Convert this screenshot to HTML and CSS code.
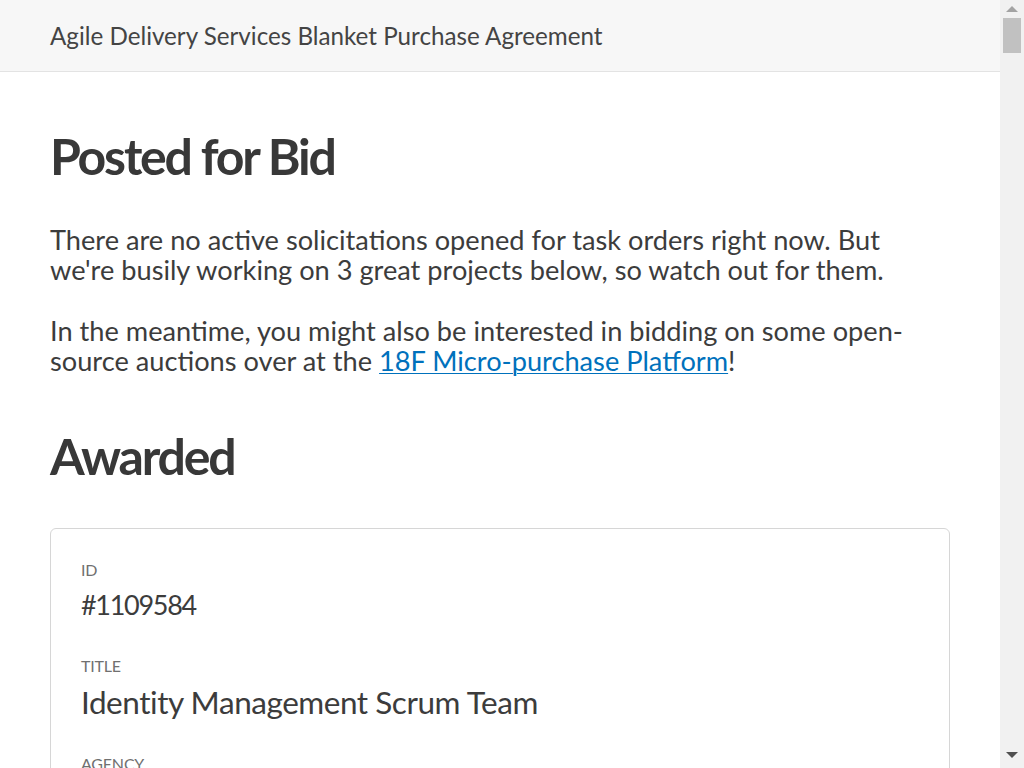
FILE: index.html
```html
<!DOCTYPE html>
<html lang="en">
<head>
<meta charset="utf-8">
<title>Agile Delivery Services Blanket Purchase Agreement</title>
<link rel="stylesheet" href="styles.css">
</head>
<body>
<header class="site-header">
  <span class="site-title">Agile Delivery Services Blanket Purchase Agreement</span>
</header>
<main class="content">
  <h1 class="section-title first">Posted for Bid</h1>
  <p class="lead">There are no active solicitations opened for task orders right now. But we're busily working on 3 great projects below, so watch out for them.</p>
  <p class="lead second">In the meantime, you might also be interested in bidding on some open-source auctions over at the <a href="#">18F Micro-purchase Platform</a>!</p>

  <h1 class="section-title awarded">Awarded</h1>

  <section class="card">
    <div class="field"><div class="label">ID</div><div class="value">#1109584</div></div>
    <div class="field"><div class="label">Title</div><div class="value title">Identity Management Scrum Team</div></div>
    <div class="field"><div class="label">Agency</div><div class="value">General Services Administration</div></div>
    <div class="field"><div class="label">Vendor</div><div class="value">Fearless Solutions, LLC</div></div>
    <div class="field"><div class="label">Award date</div><div class="value">June 21, 2017</div></div>
    <div class="field"><div class="label">Award amount</div><div class="value">$1,946,336.00</div></div>
    <div class="field"><div class="label">Period of performance</div><div class="value">12 months</div></div>
  </section>

  <section class="card">
    <div class="field"><div class="label">ID</div><div class="value">#1107620</div></div>
    <div class="field"><div class="label">Title</div><div class="value title">Cloud.gov Platform Operations</div></div>
    <div class="field"><div class="label">Agency</div><div class="value">General Services Administration</div></div>
    <div class="field"><div class="label">Vendor</div><div class="value">Agile Six Applications, Inc.</div></div>
    <div class="field"><div class="label">Award date</div><div class="value">May 4, 2017</div></div>
    <div class="field"><div class="label">Award amount</div><div class="value">$1,481,208.00</div></div>
    <div class="field"><div class="label">Period of performance</div><div class="value">12 months</div></div>
  </section>

  <section class="card">
    <div class="field"><div class="label">ID</div><div class="value">#1104512</div></div>
    <div class="field"><div class="label">Title</div><div class="value title">Federal Election Commission Website Redesign</div></div>
    <div class="field"><div class="label">Agency</div><div class="value">Federal Election Commission</div></div>
    <div class="field"><div class="label">Vendor</div><div class="value">Flexion, Inc.</div></div>
    <div class="field"><div class="label">Award date</div><div class="value">March 2, 2017</div></div>
    <div class="field"><div class="label">Award amount</div><div class="value">$812,450.00</div></div>
    <div class="field"><div class="label">Period of performance</div><div class="value">9 months</div></div>
  </section>

  <section class="card">
    <div class="field"><div class="label">ID</div><div class="value">#1101876</div></div>
    <div class="field"><div class="label">Title</div><div class="value title">USAJOBS Candidate Experience</div></div>
    <div class="field"><div class="label">Agency</div><div class="value">Office of Personnel Management</div></div>
    <div class="field"><div class="label">Vendor</div><div class="value">Nava Public Benefit Corporation</div></div>
    <div class="field"><div class="label">Award date</div><div class="value">January 18, 2017</div></div>
    <div class="field"><div class="label">Award amount</div><div class="value">$1,205,900.00</div></div>
    <div class="field"><div class="label">Period of performance</div><div class="value">12 months</div></div>
  </section>

  <section class="card">
    <div class="field"><div class="label">ID</div><div class="value">#1098433</div></div>
    <div class="field"><div class="label">Title</div><div class="value title">Data.gov Catalog Modernization</div></div>
    <div class="field"><div class="label">Agency</div><div class="value">General Services Administration</div></div>
    <div class="field"><div class="label">Vendor</div><div class="value">TrueTandem, LLC</div></div>
    <div class="field"><div class="label">Award date</div><div class="value">November 9, 2016</div></div>
    <div class="field"><div class="label">Award amount</div><div class="value">$654,120.00</div></div>
    <div class="field"><div class="label">Period of performance</div><div class="value">6 months</div></div>
  </section>

  <section class="card">
    <div class="field"><div class="label">ID</div><div class="value">#1095217</div></div>
    <div class="field"><div class="label">Title</div><div class="value title">Department of Labor Wage Data Tools</div></div>
    <div class="field"><div class="label">Agency</div><div class="value">Department of Labor</div></div>
    <div class="field"><div class="label">Vendor</div><div class="value">Excella Consulting, Inc.</div></div>
    <div class="field"><div class="label">Award date</div><div class="value">September 27, 2016</div></div>
    <div class="field"><div class="label">Award amount</div><div class="value">$968,744.00</div></div>
    <div class="field"><div class="label">Period of performance</div><div class="value">12 months</div></div>
  </section>

  <section class="card">
    <div class="field"><div class="label">ID</div><div class="value">#1092058</div></div>
    <div class="field"><div class="label">Title</div><div class="value title">Login.gov Identity Proofing</div></div>
    <div class="field"><div class="label">Agency</div><div class="value">General Services Administration</div></div>
    <div class="field"><div class="label">Vendor</div><div class="value">Ad Hoc LLC</div></div>
    <div class="field"><div class="label">Award date</div><div class="value">August 15, 2016</div></div>
    <div class="field"><div class="label">Award amount</div><div class="value">$1,120,000.00</div></div>
    <div class="field"><div class="label">Period of performance</div><div class="value">12 months</div></div>
  </section>

  <section class="card">
    <div class="field"><div class="label">ID</div><div class="value">#1089761</div></div>
    <div class="field"><div class="label">Title</div><div class="value title">Federal Acquisition Service Dashboard</div></div>
    <div class="field"><div class="label">Agency</div><div class="value">General Services Administration</div></div>
    <div class="field"><div class="label">Vendor</div><div class="value">Vidaloop, Inc.</div></div>
    <div class="field"><div class="label">Award date</div><div class="value">July 6, 2016</div></div>
    <div class="field"><div class="label">Award amount</div><div class="value">$498,300.00</div></div>
    <div class="field"><div class="label">Period of performance</div><div class="value">6 months</div></div>
  </section>

  <section class="card">
    <div class="field"><div class="label">ID</div><div class="value">#1086345</div></div>
    <div class="field"><div class="label">Title</div><div class="value title">Health Insurance Marketplace API</div></div>
    <div class="field"><div class="label">Agency</div><div class="value">Department of Health and Human Services</div></div>
    <div class="field"><div class="label">Vendor</div><div class="value">Oddball, Inc.</div></div>
    <div class="field"><div class="label">Award date</div><div class="value">May 23, 2016</div></div>
    <div class="field"><div class="label">Award amount</div><div class="value">$1,332,610.00</div></div>
    <div class="field"><div class="label">Period of performance</div><div class="value">12 months</div></div>
  </section>

  <section class="card">
    <div class="field"><div class="label">ID</div><div class="value">#1083112</div></div>
    <div class="field"><div class="label">Title</div><div class="value title">Veterans Benefits Claim Status</div></div>
    <div class="field"><div class="label">Agency</div><div class="value">Department of Veterans Affairs</div></div>
    <div class="field"><div class="label">Vendor</div><div class="value">Coforma, LLC</div></div>
    <div class="field"><div class="label">Award date</div><div class="value">April 11, 2016</div></div>
    <div class="field"><div class="label">Award amount</div><div class="value">$742,980.00</div></div>
    <div class="field"><div class="label">Period of performance</div><div class="value">9 months</div></div>
  </section>

  <section class="card">
    <div class="field"><div class="label">ID</div><div class="value">#1080498</div></div>
    <div class="field"><div class="label">Title</div><div class="value title">College Scorecard Data Pipeline</div></div>
    <div class="field"><div class="label">Agency</div><div class="value">Department of Education</div></div>
    <div class="field"><div class="label">Vendor</div><div class="value">Skylight Digital, LLC</div></div>
    <div class="field"><div class="label">Award date</div><div class="value">February 29, 2016</div></div>
    <div class="field"><div class="label">Award amount</div><div class="value">$603,415.00</div></div>
    <div class="field"><div class="label">Period of performance</div><div class="value">6 months</div></div>
  </section>

  <section class="card">
    <div class="field"><div class="label">ID</div><div class="value">#1077254</div></div>
    <div class="field"><div class="label">Title</div><div class="value title">Small Business Certification Portal</div></div>
    <div class="field"><div class="label">Agency</div><div class="value">Small Business Administration</div></div>
    <div class="field"><div class="label">Vendor</div><div class="value">Truss Works, Inc.</div></div>
    <div class="field"><div class="label">Award date</div><div class="value">January 12, 2016</div></div>
    <div class="field"><div class="label">Award amount</div><div class="value">$1,014,700.00</div></div>
    <div class="field"><div class="label">Period of performance</div><div class="value">12 months</div></div>
  </section>

  <section class="card">
    <div class="field"><div class="label">ID</div><div class="value">#1074031</div></div>
    <div class="field"><div class="label">Title</div><div class="value title">National Park Service Reservations</div></div>
    <div class="field"><div class="label">Agency</div><div class="value">Department of the Interior</div></div>
    <div class="field"><div class="label">Vendor</div><div class="value">Bixal Solutions, Inc.</div></div>
    <div class="field"><div class="label">Award date</div><div class="value">December 1, 2015</div></div>
    <div class="field"><div class="label">Award amount</div><div class="value">$887,260.00</div></div>
    <div class="field"><div class="label">Period of performance</div><div class="value">9 months</div></div>
  </section>

  <section class="card">
    <div class="field"><div class="label">ID</div><div class="value">#1070886</div></div>
    <div class="field"><div class="label">Title</div><div class="value title">Census Business Builder</div></div>
    <div class="field"><div class="label">Agency</div><div class="value">Department of Commerce</div></div>
    <div class="field"><div class="label">Vendor</div><div class="value">Fearless Solutions, LLC</div></div>
    <div class="field"><div class="label">Award date</div><div class="value">October 20, 2015</div></div>
    <div class="field"><div class="label">Award amount</div><div class="value">$559,845.00</div></div>
    <div class="field"><div class="label">Period of performance</div><div class="value">6 months</div></div>
  </section>
</main>

<div class="scrollbar" aria-hidden="true">
  <span class="sb-arrow sb-up"></span>
  <span class="sb-thumb"></span>
  <span class="sb-track"></span>
  <span class="sb-arrow sb-down"></span>
</div>
</body>
</html>
```

FILE: styles.css
```css
html {
  background: #ffffff;
}

body {
  margin: 0;
  font-family: "Lato", "Open Sans", sans-serif;
  color: #3c3c3c;
}

.site-header {
  height: 71px;
  display: flex;
  align-items: center;
  padding: 0 50px;
  background: #f7f7f7;
  border-bottom: 1px solid #e3e3e3;
}

.site-title {
  font-size: 24.2px;
  color: #444444;
}

.content {
  max-width: 900px;
  padding: 0 50px 60px;
}

.section-title {
  margin: 0;
  font-size: 50px;
  line-height: 65px;
  font-weight: 700;
  letter-spacing: -2.2px;
  color: #383838;
}

.section-title.first {
  margin-top: 52px;
}

.lead {
  margin: 36px 0 0;
  max-width: 872px;
  font-size: 27.2px;
  line-height: 30px;
}

.lead.second {
  margin-top: 31px;
}

.lead a {
  color: #0071bc;
  text-decoration: underline;
  text-underline-offset: 2px;
  text-decoration-thickness: 1px;
}

.section-title.awarded {
  margin-top: 48px;
}

.card {
  margin-top: 39px;
  border: 1px solid #d6d6d6;
  border-radius: 6px;
  padding: 31px 30px 0;
}

.field {
  margin-bottom: 32px;
}

.label {
  font-size: 16px;
  line-height: 20px;
  text-transform: uppercase;
  color: #707070;
  letter-spacing: -0.2px;
}

.value {
  margin-top: 6px;
  font-size: 27px;
  line-height: 38px;
  letter-spacing: -1.3px;
  color: #3c3c3c;
}

.value.title {
  font-size: 31.5px;
  line-height: 40px;
  letter-spacing: -0.45px;
}

/* browser-style vertical scrollbar drawn over the right edge */
.scrollbar {
  position: fixed;
  top: 0;
  right: 0;
  width: 24px;
  height: 100vh;
  box-sizing: border-box;
  padding: 6px 0 10px;
  display: flex;
  flex-direction: column;
  align-items: center;
  background: #f1f1f1;
}

.sb-arrow {
  width: 0;
  height: 0;
  border-left: 6px solid transparent;
  border-right: 6px solid transparent;
}

.sb-up {
  border-bottom: 6px solid #a3a3a3;
}

.sb-down {
  border-top: 6px solid #505050;
}

.sb-thumb {
  margin-top: 6px;
  width: 18px;
  height: 35px;
  background: #c1c1c1;
}

.sb-track {
  flex: 1;
}
```
